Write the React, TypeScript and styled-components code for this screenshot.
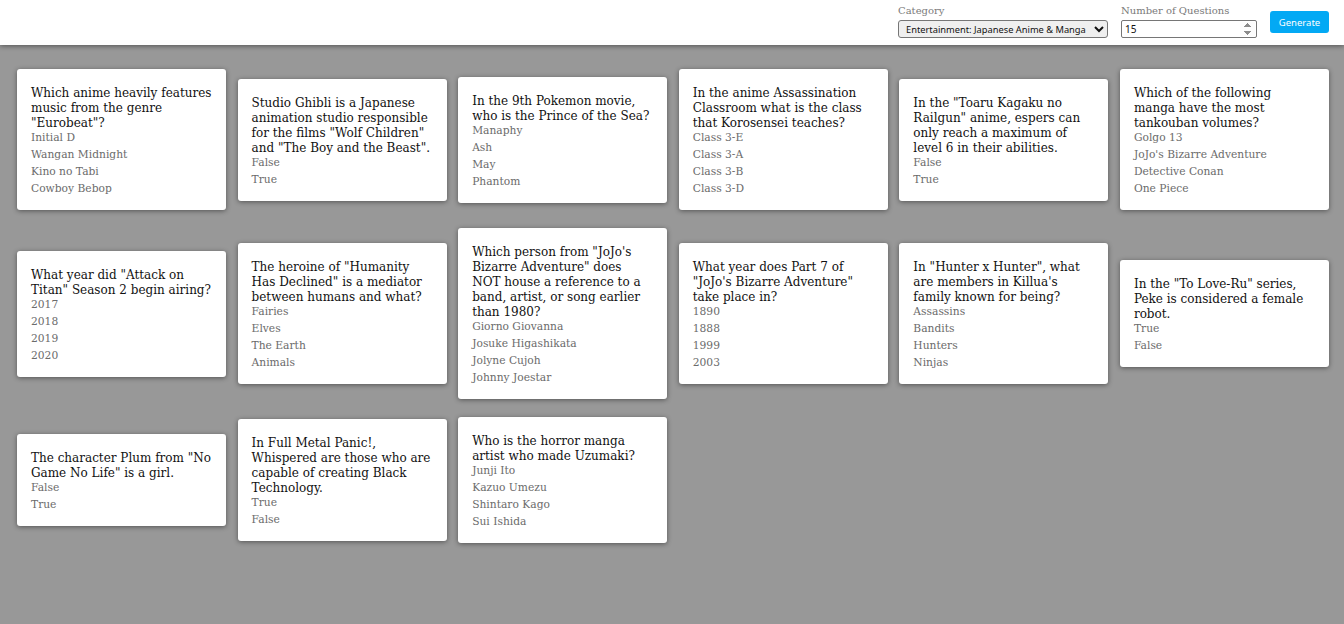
import React from "react";
import styled, { createGlobalStyle } from "styled-components";

const GlobalStyle = createGlobalStyle`
  html, body {
    margin: 0;
    padding: 0;
    background: #989898;
    min-height: 100%;
  }
  * { box-sizing: border-box; }
`;

const Page = styled.div`
  min-height: 624px;
  background: #989898;
  font-family: "DejaVu Serif", serif;
`;

const Header = styled.header`
  height: 45px;
  background: #ffffff;
  box-shadow: 0 1px 5px rgba(0, 0, 0, 0.45);
  display: flex;
  justify-content: flex-end;
  align-items: flex-start;
  padding: 4px 15px 0 0;
  position: relative;
  z-index: 1;
`;

const Field = styled.label<{ $width: number }>`
  display: flex;
  flex-direction: column;
  width: ${(p) => p.$width}px;
  margin-right: 13px;
`;

const FieldLabel = styled.span`
  font-family: "DejaVu Serif", serif;
  font-size: 10px;
  line-height: 13px;
  color: #7a7a7a;
  height: 16px;
`;

const Select = styled.select`
  height: 18px;
  width: 100%;
  font-family: "Noto Sans", sans-serif;
  font-size: 9.3px;
  color: #111;
  background: #efefef;
  border: 1px solid #767676;
  border-radius: 3px;
  padding: 0 0 0 3px;
`;

const NumberInput = styled.input`
  height: 18px;
  width: 100%;
  font-family: "Noto Sans", sans-serif;
  font-size: 10px;
  color: #111;
  background: #fff;
  border: 1px solid #767676;
  border-radius: 2px;
  padding: 0 1px 0 3px;

  &::-webkit-inner-spin-button,
  &::-webkit-outer-spin-button {
    opacity: 1;
    height: 14px;
  }
`;

const GenerateButton = styled.button`
  margin-top: 7px;
  width: 59px;
  height: 22px;
  background: #03a9f4;
  color: #fff;
  border: none;
  border-radius: 3px;
  font-family: "Noto Sans", sans-serif;
  font-size: 9.5px;
  padding: 0;
  cursor: pointer;
`;

const Grid = styled.main`
  display: grid;
  grid-template-columns: repeat(6, 1fr);
  column-gap: 11.5px;
  row-gap: 18px;
  align-items: center;
  padding: 24px 15px 24px 17px;
`;

const Card = styled.div`
  background: #fff;
  border-radius: 3px;
  box-shadow: 0 1px 5px rgba(0, 0, 0, 0.45);
  padding: 17px 14px 11px 14px;
`;

const Question = styled.div`
  font-family: "DejaVu Serif", serif;
  font-size: 12px;
  line-height: 15px;
  color: #111;
`;

const Answers = styled.ul`
  list-style: none;
  margin: 0;
  padding: 0;
`;

const Answer = styled.li`
  font-family: "DejaVu Serif", serif;
  font-size: 10.7px;
  line-height: 13px;
  padding-bottom: 4px;
  color: #6b6b6b;
`;

type Q = { q: string; a: string[] };

const questions: Q[] = [
  { q: 'Which anime heavily features music from the genre "Eurobeat"?', a: ["Initial D", "Wangan Midnight", "Kino no Tabi", "Cowboy Bebop"] },
  { q: 'Studio Ghibli is a Japanese animation studio responsible for the films "Wolf Children" and "The Boy and the Beast".', a: ["False", "True"] },
  { q: "In the 9th Pokemon movie, who is the Prince of the Sea?", a: ["Manaphy", "Ash", "May", "Phantom"] },
  { q: "In the anime Assassination Classroom what is the class that Korosensei teaches?", a: ["Class 3-E", "Class 3-A", "Class 3-B", "Class 3-D"] },
  { q: 'In the "Toaru Kagaku no Railgun" anime, espers can only reach a maximum of level 6 in their abilities.', a: ["False", "True"] },
  { q: "Which of the following manga have the most tankouban volumes?", a: ["Golgo 13", "JoJo's Bizarre Adventure", "Detective Conan", "One Piece"] },
  { q: 'What year did "Attack on Titan" Season 2 begin airing?', a: ["2017", "2018", "2019", "2020"] },
  { q: 'The heroine of "Humanity Has Declined" is a mediator between humans and what?', a: ["Fairies", "Elves", "The Earth", "Animals"] },
  { q: 'Which person from "JoJo\'s Bizarre Adventure" does NOT house a reference to a band, artist, or song earlier than 1980?', a: ["Giorno Giovanna", "Josuke Higashikata", "Jolyne Cujoh", "Johnny Joestar"] },
  { q: 'What year does Part 7 of "JoJo\'s Bizarre Adventure" take place in?', a: ["1890", "1888", "1999", "2003"] },
  { q: 'In "Hunter x Hunter", what are members in Killua\'s family known for being?', a: ["Assassins", "Bandits", "Hunters", "Ninjas"] },
  { q: 'In the "To Love-Ru" series, Peke is considered a female robot.', a: ["True", "False"] },
  { q: 'The character Plum from "No Game No Life" is a girl.', a: ["False", "True"] },
  { q: "In Full Metal Panic!, Whispered are those who are capable of creating Black Technology.", a: ["True", "False"] },
  { q: "Who is the horror manga artist who made Uzumaki?", a: ["Junji Ito", "Kazuo Umezu", "Shintaro Kago", "Sui Ishida"] },
];

export default function App() {
  return (
    <>
      <GlobalStyle />
      <Page>
        <Header>
          <Field $width={210}>
            <FieldLabel>Category</FieldLabel>
            <Select defaultValue="anime">
              <option value="anime">Entertainment: Japanese Anime &amp; Manga</option>
            </Select>
          </Field>
          <Field $width={136}>
            <FieldLabel>Number of Questions</FieldLabel>
            <NumberInput type="number" defaultValue={15} />
          </Field>
          <GenerateButton>Generate</GenerateButton>
        </Header>
        <Grid>
          {questions.map((item, i) => (
            <Card key={i}>
              <Question>{item.q}</Question>
              <Answers>
                {item.a.map((ans) => (
                  <Answer key={ans}>{ans}</Answer>
                ))}
              </Answers>
            </Card>
          ))}
        </Grid>
      </Page>
    </>
  );
}
